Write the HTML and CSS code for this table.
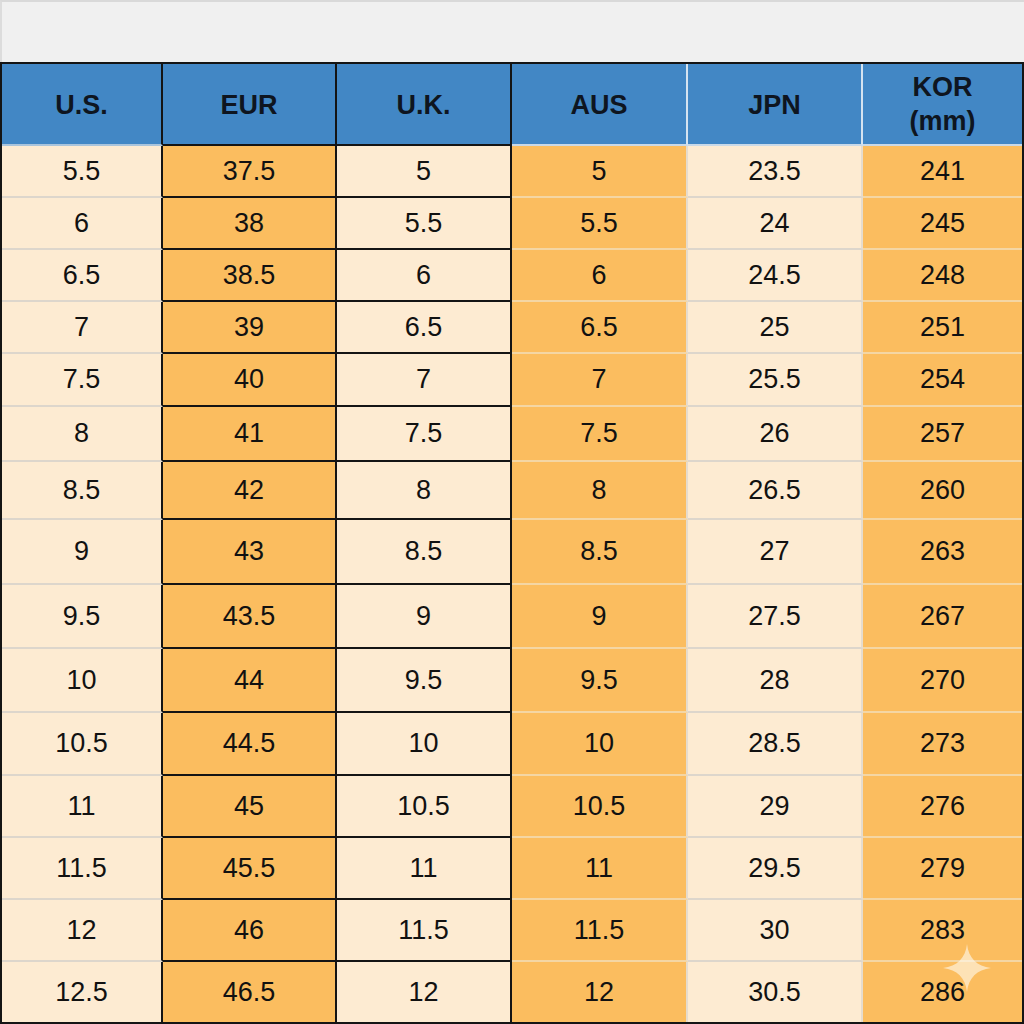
FILE: index.html
```html
<!DOCTYPE html>
<html>
<head>
<meta charset="utf-8">
<link rel="stylesheet" href="styles.css">
</head>
<body>
<div class="page">
  <div class="topbar"></div>
  <div class="chart">
    <div class="cell head c1">U.S.</div>
    <div class="cell head c2">EUR</div>
    <div class="cell head c3">U.K.</div>
    <div class="cell head c4">AUS</div>
    <div class="cell head c5">JPN</div>
    <div class="cell head c6">KOR<br>(mm)</div>

    <div class="cell c1">5.5</div><div class="cell c2">37.5</div><div class="cell c3">5</div><div class="cell c4">5</div><div class="cell c5">23.5</div><div class="cell c6">241</div>
    <div class="cell c1">6</div><div class="cell c2">38</div><div class="cell c3">5.5</div><div class="cell c4">5.5</div><div class="cell c5">24</div><div class="cell c6">245</div>
    <div class="cell c1">6.5</div><div class="cell c2">38.5</div><div class="cell c3">6</div><div class="cell c4">6</div><div class="cell c5">24.5</div><div class="cell c6">248</div>
    <div class="cell c1">7</div><div class="cell c2">39</div><div class="cell c3">6.5</div><div class="cell c4">6.5</div><div class="cell c5">25</div><div class="cell c6">251</div>
    <div class="cell c1">7.5</div><div class="cell c2">40</div><div class="cell c3">7</div><div class="cell c4">7</div><div class="cell c5">25.5</div><div class="cell c6">254</div>
    <div class="cell c1">8</div><div class="cell c2">41</div><div class="cell c3">7.5</div><div class="cell c4">7.5</div><div class="cell c5">26</div><div class="cell c6">257</div>
    <div class="cell c1">8.5</div><div class="cell c2">42</div><div class="cell c3">8</div><div class="cell c4">8</div><div class="cell c5">26.5</div><div class="cell c6">260</div>
    <div class="cell c1">9</div><div class="cell c2">43</div><div class="cell c3">8.5</div><div class="cell c4">8.5</div><div class="cell c5">27</div><div class="cell c6">263</div>
    <div class="cell c1">9.5</div><div class="cell c2">43.5</div><div class="cell c3">9</div><div class="cell c4">9</div><div class="cell c5">27.5</div><div class="cell c6">267</div>
    <div class="cell c1">10</div><div class="cell c2">44</div><div class="cell c3">9.5</div><div class="cell c4">9.5</div><div class="cell c5">28</div><div class="cell c6">270</div>
    <div class="cell c1">10.5</div><div class="cell c2">44.5</div><div class="cell c3">10</div><div class="cell c4">10</div><div class="cell c5">28.5</div><div class="cell c6">273</div>
    <div class="cell c1">11</div><div class="cell c2">45</div><div class="cell c3">10.5</div><div class="cell c4">10.5</div><div class="cell c5">29</div><div class="cell c6">276</div>
    <div class="cell c1">11.5</div><div class="cell c2">45.5</div><div class="cell c3">11</div><div class="cell c4">11</div><div class="cell c5">29.5</div><div class="cell c6">279</div>
    <div class="cell c1">12</div><div class="cell c2">46</div><div class="cell c3">11.5</div><div class="cell c4">11.5</div><div class="cell c5">30</div><div class="cell c6">283</div>
    <div class="cell c1 last">12.5</div><div class="cell c2 last">46.5</div><div class="cell c3 last">12</div><div class="cell c4 last">12</div><div class="cell c5 last">30.5</div><div class="cell c6 last">286</div>
  </div>
  <svg class="sparkle" width="48" height="48" viewBox="0 0 48 48" aria-hidden="true">
    <path d="M24 0 C25.5 14 34 22.5 48 24 C34 25.5 25.5 34 24 48 C22.5 34 14 25.5 0 24 C14 22.5 22.5 14 24 0 Z" fill="rgba(255,250,240,0.6)"/>
  </svg>
</div>
</body>
</html>
```

FILE: styles.css
```css
* { box-sizing: border-box; }
html, body { margin: 0; padding: 0; }
body {
  width: 1024px;
  height: 1024px;
  overflow: hidden;
  font-family: "Liberation Sans", Arial, sans-serif;
  color: #111;
  background: #f0f0f0;
}
.page {
  position: relative;
  width: 1024px;
  height: 1024px;
}
.topbar {
  height: 62px;
  background: #f0f0f0;
  border-top: 2px solid #d9d9d9;
  border-left: 2px solid #dcdcdc;
}
.chart {
  display: grid;
  grid-template-columns: 161px 174px 175px 176px 175px 159px;
  grid-template-rows: 82px 52px 52px 52px 52px 53px 55px 58px 65px 64px 64px 63px 62px 62px 62px 60px;
  border: 2px solid #141414;
  background: #fdebd2;
}
.cell {
  display: flex;
  align-items: center;
  justify-content: center;
  text-align: center;
  font-size: 27px;
  border-right: 2px solid #e6dccd;
  border-bottom: 2px solid #ddd6cc;
}
.c1, .c3, .c5 { background: #fdebd2; }
.c2, .c4, .c6 { background: #fbbd5f; }
.c4, .c6 { border-bottom-color: #f4d6a4; }
.c1 { border-right-color: #141414; }
.c2, .c3 { border-right-color: #141414; border-bottom-color: #141414; }
.c6 { border-right: none; }
.last { border-bottom: none; }

.head {
  background: #4287c5;
  font-weight: bold;
  font-size: 27px;
  line-height: 34px;
  color: #0e1520;
  border-bottom-color: #b9cfe2;
  padding-top: 2px;
}
.head.c1 { border-right-color: #141414; border-bottom-color: #a9c4dc; }
.head.c2, .head.c3 { border-right-color: #141414; border-bottom-color: #141414; }
.head.c4, .head.c5 { border-right-color: #d5e3f0; }
.head.c4, .head.c5, .head.c6 { border-bottom-color: #c9d9e8; }
.head.c6 { padding-top: 0; }

.sparkle {
  position: absolute;
  left: 943px;
  top: 944px;
}
```
